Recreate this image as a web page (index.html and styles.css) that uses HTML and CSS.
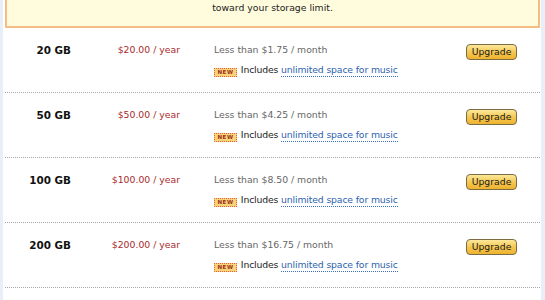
FILE: index.html
```html
<!DOCTYPE html>
<html>
<head>
<meta charset="utf-8">
<link rel="stylesheet" href="styles.css">
</head>
<body>
<div class="page">
  <div class="notice">toward your storage limit.</div>
  <div class="plans">
    <div class="plan">
      <div class="size">20 GB</div>
      <div class="price">$20.00 / year</div>
      <div class="desc">
        <div class="monthly">Less than $1.75 / month</div>
        <div class="extra"><span class="new">NEW</span> Includes <a class="link" href="#">unlimited space for music</a></div>
      </div>
      <div class="action"><button class="upgrade">Upgrade</button></div>
    </div>
    <div class="plan">
      <div class="size">50 GB</div>
      <div class="price">$50.00 / year</div>
      <div class="desc">
        <div class="monthly">Less than $4.25 / month</div>
        <div class="extra"><span class="new">NEW</span> Includes <a class="link" href="#">unlimited space for music</a></div>
      </div>
      <div class="action"><button class="upgrade">Upgrade</button></div>
    </div>
    <div class="plan">
      <div class="size">100 GB</div>
      <div class="price">$100.00 / year</div>
      <div class="desc">
        <div class="monthly">Less than $8.50 / month</div>
        <div class="extra"><span class="new">NEW</span> Includes <a class="link" href="#">unlimited space for music</a></div>
      </div>
      <div class="action"><button class="upgrade">Upgrade</button></div>
    </div>
    <div class="plan">
      <div class="size">200 GB</div>
      <div class="price">$200.00 / year</div>
      <div class="desc">
        <div class="monthly">Less than $16.75 / month</div>
        <div class="extra"><span class="new">NEW</span> Includes <a class="link" href="#">unlimited space for music</a></div>
      </div>
      <div class="action"><button class="upgrade">Upgrade</button></div>
    </div>
  </div>
</div>
</body>
</html>
```
FILE: styles.css
```css
html, body {
  margin: 0;
  padding: 0;
  background: #e9eff9;
  height: 100%;
}
body {
  font-family: "DejaVu Sans", Verdana, sans-serif;
  font-size: 9.3px;
  line-height: 14px;
  color: #222;
}
.page {
  margin: 0 4px 0 3px;
  padding: 0 1px 0 2px;
  background: #fff;
  min-height: 100%;
}
.notice {
  background: #fffcdd;
  border: 2px solid #f6bc86;
  border-top: none;
  padding: 1px 0 11px;
  text-align: center;
  color: #222;
}
.plan {
  display: grid;
  grid-template-columns: 66px 109px 286px 51px;
  align-items: start;
  padding: 15px 0 15px;
  border-bottom: 1px dotted #a8a8a8;
}
.size {
  text-align: right;
  font-weight: bold;
  font-size: 10.4px;
  color: #111;
}
.price {
  text-align: right;
  color: #a8292b;
}
.desc {
  padding-left: 34px;
}
.monthly {
  color: #666;
}
.extra {
  margin-top: 6px;
  color: #222;
  letter-spacing: -0.15px;
}
.new {
  display: inline-block;
  width: 21px;
  height: 7px;
  line-height: 7px;
  vertical-align: -1px;
  background: #f9d477;
  border: 1px dotted #e0604a;
  color: #9a2e22;
  font-size: 5.5px;
  font-weight: bold;
  text-align: center;
  letter-spacing: 0.6px;
  margin-right: 1px;
}
.link {
  color: #2d5fae;
  text-decoration: none;
  border-bottom: 1px dotted #3a6cc0;
  padding-bottom: 1px;
}
.action {
  padding-top: 1px;
}
.upgrade {
  display: block;
  width: 51px;
  height: 16px;
  padding: 0;
  margin: 0;
  font-family: "DejaVu Sans", Verdana, sans-serif;
  font-size: 9.3px;
  line-height: 14px;
  color: #1a1a1a;
  background: linear-gradient(#fde89a, #f4c54e 55%, #eeb32f);
  border: 1px solid #7c6c44;
  border-radius: 4px;
}
```
